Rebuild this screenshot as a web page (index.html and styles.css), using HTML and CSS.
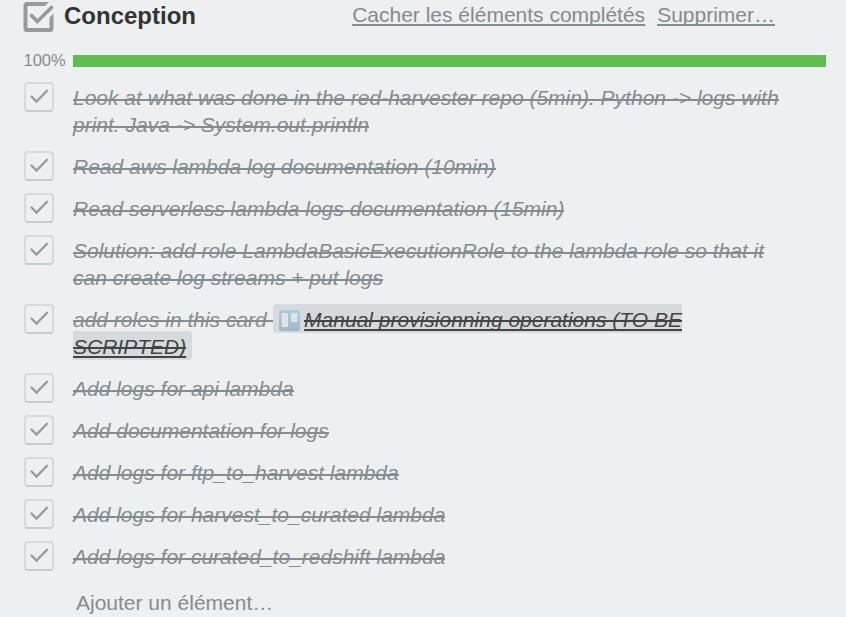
FILE: index.html
```html
<!DOCTYPE html>
<html lang="fr">
<head>
<meta charset="utf-8">
<title>Conception</title>
<link rel="stylesheet" href="styles.css">
</head>
<body>
<svg class="defs" width="0" height="0">
  <symbol id="check" viewBox="0 0 30 30"><path d="M7.500 14.500l5 5L23 8.800" fill="none" stroke="currentColor" stroke-width="2.300" stroke-linecap="round"/></symbol>
</svg>
<main class="checklist">
  <header class="head">
    <svg class="head-icon" viewBox="0 0 32 32"><path d="M26 2H4Q0.500 2 0.500 5.500V28.500Q0.500 32 4 32H27Q30.500 32 30.500 28.500V13.500L26.500 17.500V28H4.500V6H22Z" fill="#999"/><path d="M8.500 15.500l5.800 6L28.500 7.500" fill="none" stroke="#999" stroke-width="3.600" stroke-linecap="round"/></svg>
    <h3 class="title">Conception</h3>
    <nav class="actions"><a href="#">Cacher les éléments complétés</a><a href="#">Supprimer…</a></nav>
  </header>
  <div class="progress"><span class="percent">100%</span><div class="bar"></div></div>
  <ul class="items">
    <li><span class="box"><svg><use href="#check"/></svg></span><p><s>Look at what was done in the red-harvester repo (5min). Python -&gt; logs with<br>print. Java -&gt; System.out.println</s></p></li>
    <li><span class="box"><svg><use href="#check"/></svg></span><p><s>Read aws lambda log documentation (10min)</s></p></li>
    <li><span class="box"><svg><use href="#check"/></svg></span><p><s>Read serverless lambda logs documentation (15min)</s></p></li>
    <li><span class="box"><svg><use href="#check"/></svg></span><p><s>Solution: add role LambdaBasicExecutionRole to the lambda role so that it<br>can create log streams + put logs</s></p></li>
    <li class="linked"><span class="box"><svg><use href="#check"/></svg></span><p><s>add roles in this card </s><a class="card" href="#"><svg class="board" viewBox="0 0 21 21"><defs><linearGradient id="sky" x1="0" y1="0" x2="0" y2="1"><stop offset="0" stop-color="#abcde2"/><stop offset="1" stop-color="#a2b7c9"/></linearGradient></defs><rect width="21" height="21" rx="2.500" fill="url(#sky)"/><rect x="2.700" y="3" width="6.300" height="14" rx="1" fill="#dfe4e7"/><rect x="12" y="3" width="6.300" height="9" rx="1" fill="#dfe4e7"/></svg><s class="name">Manual provisionning operations (TO BE<br>SCRIPTED)</s></a></p></li>
    <li><span class="box"><svg><use href="#check"/></svg></span><p><s>Add logs for api lambda</s></p></li>
    <li><span class="box"><svg><use href="#check"/></svg></span><p><s>Add documentation for logs</s></p></li>
    <li><span class="box"><svg><use href="#check"/></svg></span><p><s>Add logs for ftp_to_harvest lambda</s></p></li>
    <li><span class="box"><svg><use href="#check"/></svg></span><p><s>Add logs for harvest_to_curated lambda</s></p></li>
    <li><span class="box"><svg><use href="#check"/></svg></span><p><s>Add logs for curated_to_redshift lambda</s></p></li>
  </ul>
  <div class="add">Ajouter un élément…</div>
</main>
</body>
</html>
```
FILE: styles.css
```css
* { box-sizing: border-box; }
body { margin: 0; height: 617px; overflow: hidden; background: #edeff0; color: #838c91; font-family: "Liberation Sans", Arial, sans-serif; font-size: 21px; line-height: 27px; }
.defs { display: block; }
.checklist { padding: 0 20px 0 23px; }
.head { display: flex; height: 55px; align-items: flex-start; }
.head-icon { width: 32px; height: 32px; }
.title { margin: 2px 0 0 9px; font-size: 24px; line-height: 28px; color: #333; }
.actions { display: flex; gap: 12px; margin: 1px 51px 0 auto; }
.actions a { color: #838c91; text-decoration-thickness: 2px; text-underline-offset: 2px; text-decoration-skip-ink: none; }
.progress { display: flex; height: 12px; align-items: center; }
.percent { width: 50px; padding-left: 0.500px; font-size: 16.500px; line-height: 18px; margin-top: -2px; }
.bar { flex: 1; height: 12px; background: #61bd4f; }
.items { list-style: none; margin: 15px 0 0; padding: 0; }
.items li { display: flex; align-items: flex-start; margin-bottom: 12px; }
.items p { margin: 2px 0 1px 19px; font-style: italic; white-space: nowrap; }
.items s { --strike: 13px; text-decoration: none; background: linear-gradient(transparent var(--strike), currentColor var(--strike), currentColor calc(var(--strike) + 2px), transparent calc(var(--strike) + 2px)); }
.items .linked s { --strike: 12px; }
.box { width: 30px; height: 30px; margin-left: 1px; flex: none; border: 2px solid #d6dadc; border-bottom-color: #c4cccc; border-radius: 4px; color: #999; }
.box svg { display: block; width: 30px; height: 30px; margin: -2px; }
.card { color: #444; background: #d6dadc; padding: 4px 6px 2px; border-radius: 4px; text-decoration: none; }
.items .name { text-decoration: underline 2px; text-underline-offset: 2px; text-decoration-skip-ink: none; }
.board { width: 21px; height: 21px; margin-right: 4.500px; vertical-align: -4px; }
.add { margin: 18px 0 0 53px; }
```
